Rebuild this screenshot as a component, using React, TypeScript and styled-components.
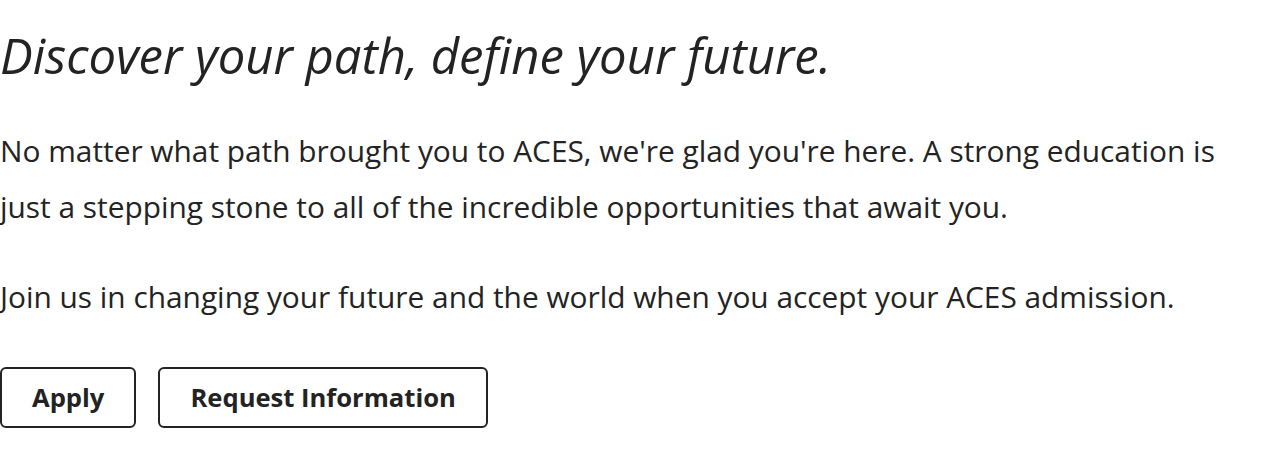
import React from "react";
import styled, { createGlobalStyle } from "styled-components";

const GlobalStyle = createGlobalStyle`
  html, body {
    margin: 0;
    padding: 0;
    background: #ffffff;
  }
  body {
    font-family: "Open Sans", "Noto Sans", sans-serif;
    color: #232323;
  }
`;

const Section = styled.section`
  display: flex;
  flex-direction: column;
  align-items: flex-start;
  max-width: 1236px;
  padding-top: 26px;
`;

const Heading = styled.h1`
  margin: 0 0 38px;
  font-size: 49px;
  line-height: 59px;
  font-style: italic;
  font-weight: 400;
`;

const Paragraph = styled.p<{ $gap?: number }>`
  margin: 0 0 ${(p) => p.$gap ?? 0}px;
  font-size: 29.85px;
  line-height: 56px;
  font-weight: 400;
`;

const Actions = styled.div`
  display: flex;
  gap: 22px;
`;

const ActionButton = styled.a`
  display: inline-flex;
  align-items: center;
  justify-content: center;
  box-sizing: border-box;
  height: 61px;
  padding: 0 30px;
  border: 2px solid #232323;
  border-radius: 6px;
  font-size: 25.6px;
  font-weight: 700;
  color: #232323;
  text-decoration: none;
  background: #ffffff;
  cursor: pointer;
`;

export default function App() {
  return (
    <>
      <GlobalStyle />
      <Section>
        <Heading>Discover your path, define your future.</Heading>
        <Paragraph $gap={34}>
          No matter what path brought you to ACES, we're glad you're here. A strong
          education is just a stepping stone to all of the incredible opportunities
          that await you.
        </Paragraph>
        <Paragraph $gap={42}>
          Join us in changing your future and the world when you accept your ACES
          admission.
        </Paragraph>
        <Actions>
          <ActionButton href="#apply">Apply</ActionButton>
          <ActionButton href="#request">Request Information</ActionButton>
        </Actions>
      </Section>
    </>
  );
}
